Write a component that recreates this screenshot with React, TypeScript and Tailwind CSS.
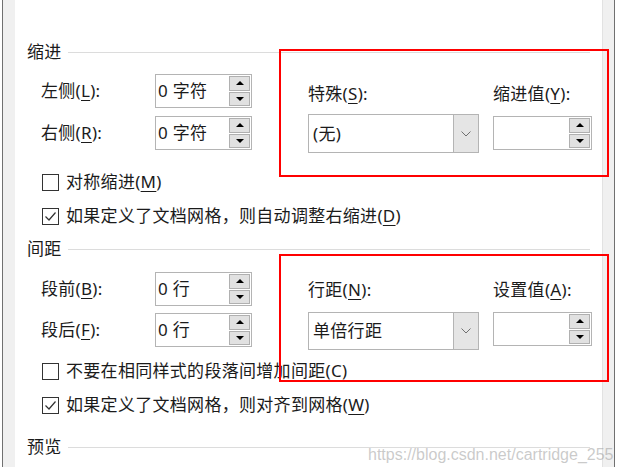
import React from "react";

const U = ({ c }: { c: string }) => (
  <span className="underline decoration-1 underline-offset-[3px]">{c}</span>
);

const Spin = ({ w, h, text, className = "" }: { w: number; h: number; text?: string; className?: string }) => (
  <div
    className={"flex shrink-0 border border-[#b4b4b4] bg-white " + className}
    style={{ width: w, height: h }}
  >
    <div className="flex flex-1 items-center pl-[2px]">{text}</div>
    <div className="flex w-[22px] flex-col gap-px py-px pr-px">
      <div className="flex flex-1 items-center justify-center border border-[#b0b0b0] bg-[#e1e1e1]">
        <div className="h-0 w-0 border-x-[4px] border-b-[4px] border-x-transparent border-b-black" />
      </div>
      <div className="flex flex-1 items-center justify-center border border-[#b0b0b0] bg-[#e1e1e1]">
        <div className="h-0 w-0 border-x-[4px] border-t-[4px] border-x-transparent border-t-black" />
      </div>
    </div>
  </div>
);

const Combo = ({ text, h }: { text: string; h: number }) => (
  <div className="flex w-[171px] shrink-0 border border-[#b4b4b4] bg-white" style={{ height: h }}>
    <div className="flex flex-1 items-center pl-[4px]">{text}</div>
    <div className="flex w-[25px] items-center justify-center border-l border-[#b4b4b4] bg-[#e5e5e5]">
      <svg width="10" height="6" viewBox="0 0 10 6">
        <polyline points="0.5,0.5 5,5 9.5,0.5" fill="none" stroke="#707070" strokeWidth="1" />
      </svg>
    </div>
  </div>
);

const Check = ({ checked, children }: { checked?: boolean; children: React.ReactNode }) => (
  <div className="flex h-[34px] items-center pl-[15px]">
    <div className="flex h-[17px] w-[17px] shrink-0 items-center justify-center border border-[#333333] bg-white">
      {checked && (
        <svg width="15" height="15" viewBox="0 0 15 15">
          <polyline points="2.5,7.5 6,11 12.5,3.5" fill="none" stroke="#333333" strokeWidth="1.2" />
        </svg>
      )}
    </div>
    <span className="ml-[7px] whitespace-nowrap">{children}</span>
  </div>
);

const Header = ({ text, className = "" }: { text: string; className?: string }) => (
  <div className={"flex h-[22px] items-center " + className}>
    <span className="whitespace-nowrap">{text}</span>
    <div className="ml-[6px] h-px flex-1 bg-[#dcdcdc]" />
  </div>
);

export default function App() {
  return (
    <div
      className="relative h-[476px] w-[621px] overflow-hidden bg-white text-[17px] leading-[24px] tracking-[0.3px] text-[#1b1b1b]"
      style={{ fontFamily: "'Noto Sans','Noto Sans CJK SC',sans-serif" }}
    >
      <div className="flex h-[467px]">
        <div className="w-[2px] shrink-0" />
        <div className="w-px shrink-0 bg-[#707070]" />
        <div className="w-[12px] shrink-0 bg-[#f0f0f0]" />
        <div className="w-[587px] shrink-0 pl-[12px] pr-[12px] pt-[41px]">
          <Header text="缩进" />
          <div className="mt-[11px] flex pl-[14px]">
            <div className="flex shrink-0 flex-col gap-[8px]">
              <div className="flex h-[34px] items-center">
                <span className="w-[114px] shrink-0">
                  左侧(<U c="L" />):
                </span>
                <Spin w={97} h={34} text="0 字符" />
              </div>
              <div className="flex h-[34px] items-center">
                <span className="w-[114px] shrink-0">
                  右侧(<U c="R" />):
                </span>
                <Spin w={97} h={34} text="0 字符" />
              </div>
            </div>
            <div className="ml-[56px] flex shrink-0 gap-[14px]">
              <div className="w-[171px] shrink-0">
                <div className="flex h-[40px] items-center">
                  特殊(<U c="S" />):
                </div>
                <Combo text="(无)" h={39} />
              </div>
              <div className="w-[99px] shrink-0">
                <div className="flex h-[40px] items-center whitespace-nowrap">
                  缩进值(<U c="Y" />):
                </div>
                <Spin w={99} h={34} className="mt-[2px]" />
              </div>
            </div>
          </div>
          <div className="mt-[12px]">
            <Check>
              对称缩进(<U c="M" />)
            </Check>
            <Check checked>
              如果定义了文档网格，则自动调整右缩进(<U c="D" />)
            </Check>
          </div>
          <Header text="间距" className="mt-[5px]" />
          <div className="mt-[12px] flex pl-[14px]">
            <div className="flex shrink-0 flex-col gap-[7px]">
              <div className="flex h-[34px] items-center">
                <span className="w-[114px] shrink-0">
                  段前(<U c="B" />):
                </span>
                <Spin w={97} h={34} text="0 行" />
              </div>
              <div className="flex h-[34px] items-center">
                <span className="w-[114px] shrink-0">
                  段后(<U c="F" />):
                </span>
                <Spin w={97} h={34} text="0 行" />
              </div>
            </div>
            <div className="ml-[56px] flex shrink-0 gap-[14px]">
              <div className="w-[171px] shrink-0">
                <div className="mb-[4px] flex h-[36px] items-center">
                  行距(<U c="N" />):
                </div>
                <Combo text="单倍行距" h={38} />
              </div>
              <div className="w-[99px] shrink-0">
                <div className="mb-[4px] flex h-[36px] items-center whitespace-nowrap">
                  设置值(<U c="A" />):
                </div>
                <Spin w={99} h={34} className="mt-[1px]" />
              </div>
            </div>
          </div>
          <div className="mt-[4px]">
            <Check>
              不要在相同样式的段落间增加间距(<U c="C" />)
            </Check>
            <Check checked>
              如果定义了文档网格，则对齐到网格(<U c="W" />)
            </Check>
          </div>
          <Header text="预览" className="mt-[14px]" />
        </div>
        <div className="w-[12px] shrink-0 border-l border-[#e2e2e2] bg-[#f0f0f0]" />
        <div className="w-px shrink-0 bg-[#707070]" />
        <div className="flex-1" />
      </div>

      <div className="pointer-events-none absolute left-[279px] top-[49px] h-[128px] w-[330px] border-2 border-[#ff0000]" />
      <div className="pointer-events-none absolute left-[279px] top-[254px] h-[128px] w-[330px] border-2 border-[#ff0000]" />
      <div
        className="pointer-events-none absolute left-[368px] top-[446px] whitespace-nowrap text-[16px] leading-[18px] tracking-normal text-[rgba(150,150,150,0.5)]"
        style={{ fontFamily: "'Liberation Sans',Arial,sans-serif" }}
      >
        https://blog.csdn.net/cartridge_255
      </div>
    </div>
  );
}
